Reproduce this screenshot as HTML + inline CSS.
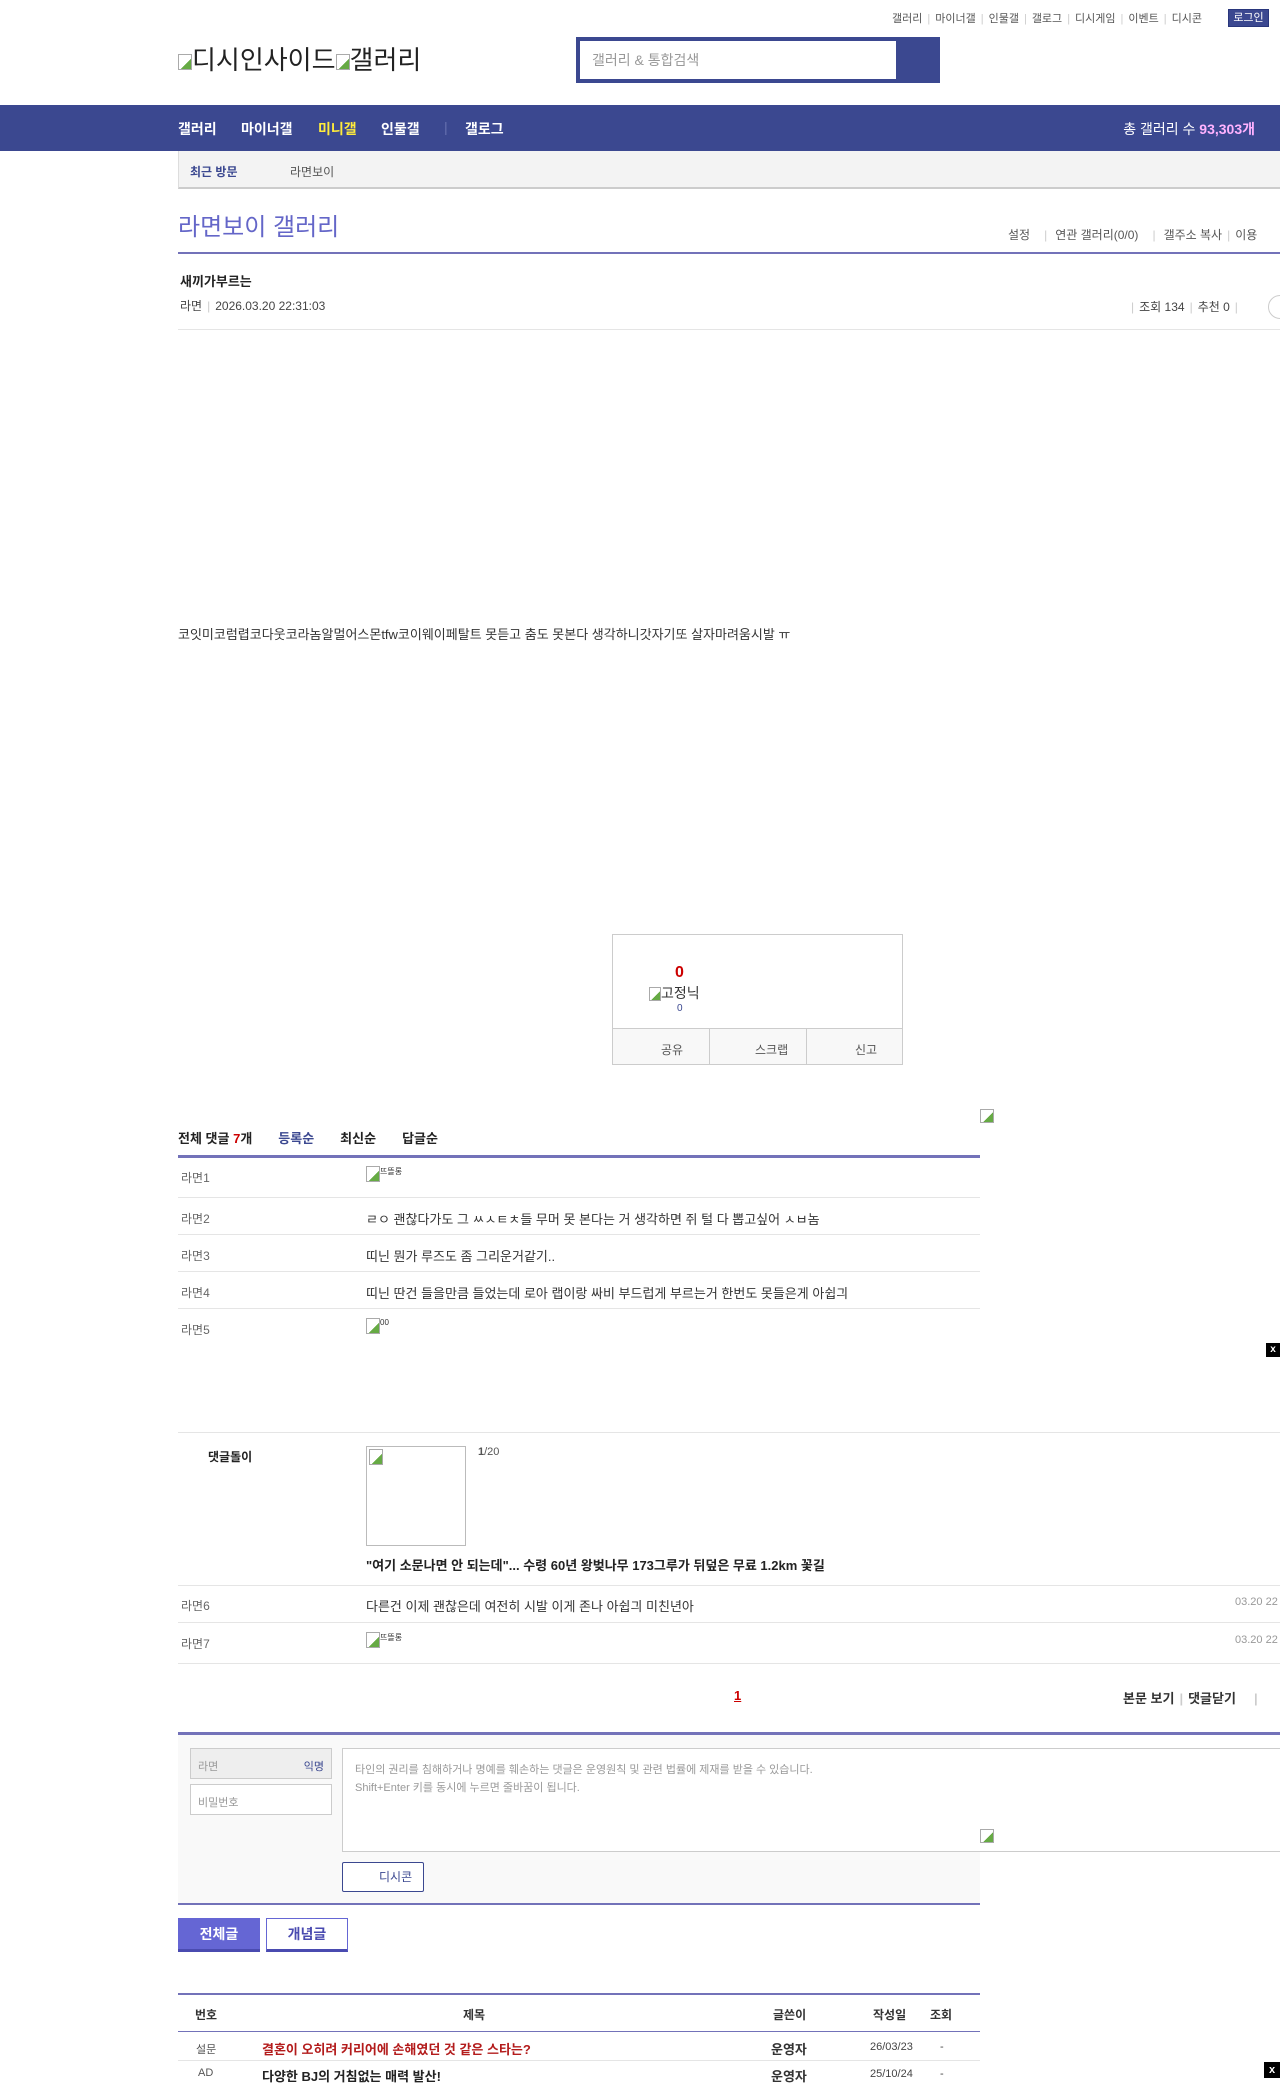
<!DOCTYPE html>
<html><head><meta charset="utf-8"><style>
*{margin:0;padding:0;box-sizing:border-box}
body{width:1280px;height:2078px;position:relative;overflow:hidden;background:#fff;font-family:"Liberation Sans","Noto Sans CJK KR",sans-serif;font-size:12px;color:#333}
.a{position:absolute;white-space:nowrap}
.sep{color:#ccc;margin:0 5px}
.hl{position:absolute;height:1px;background:#e5e5e5}
.ico{display:inline-block;width:14px;height:16px;border:1px solid #aaa;vertical-align:middle;background:linear-gradient(135deg,#fff 60%,#6a4 60%)}
.nv{position:absolute;top:119px;color:#fff;font-size:14px;font-weight:bold;white-space:nowrap}
</style></head><body>
<div class="a" style="top:10px;left:892px;font-size:11px;color:#555">갤러리<span class="sep">|</span>마이너갤<span class="sep">|</span>인물갤<span class="sep">|</span>갤로그<span class="sep">|</span>디시게임<span class="sep">|</span>이벤트<span class="sep">|</span>디시콘</div>
<div class="a" style="top:9px;left:1228px;width:41px;height:18px;background:#3b4890;border:1px solid #29367c;color:#fff;font-size:11px;text-align:center;line-height:16px">로그인</div>
<div class="a" style="top:40px;left:178px;font-size:26px;color:#222"><span class="ico"></span>디시인사이드<span class="ico"></span>갤러리</div>
<div class="a" style="top:37px;left:576px;width:364px;height:46px;background:#3b4890;padding:4px"><div style="width:316px;height:38px;background:#fff;color:#999;font-size:14px;line-height:38px;padding-left:12px">갤러리 &amp; 통합검색</div></div>
<div class="a" style="top:105px;left:0;width:1280px;height:46px;background:#3b4890"></div>
<div class="nv" style="left:178px">갤러리</div>
<div class="nv" style="left:241px">마이너갤</div>
<div class="nv" style="left:318px;color:#ffeb3b">미니갤</div>
<div class="nv" style="left:381px">인물갤</div>
<div class="nv" style="left:444px;color:#6670b0;font-weight:normal">|</div>
<div class="nv" style="left:465px">갤로그</div>
<div class="a" style="top:119px;right:25px;color:#fff;font-size:14px">총 갤러리 수 <b style="color:#ffb2ff">93,303개</b></div>
<div class="a" style="top:151px;left:178px;width:1102px;height:38px;background:#f3f3f3;border-left:1px solid #ddd;border-bottom:2px solid #ccc"></div>
<div class="a" style="top:163px;left:190px;color:#3b4890;font-weight:bold;font-size:12px">최근 방문</div>
<div class="a" style="top:163px;left:290px;color:#555;font-size:12px">라면보이</div>
<div class="a" style="top:207px;left:178px;color:#6466c8;font-size:24px">라면보이 갤러리</div>
<div class="a" style="top:226px;left:1008px;color:#555;font-size:12px">설정<span class="sep" style="margin:0 8px 0 14px">|</span>연관 갤러리(0/0)<span class="sep" style="margin:0 8px 0 14px">|</span>갤주소 복사<span class="sep">|</span>이용</div>
<div class="a" style="top:252px;left:178px;width:1102px;height:2px;background:#7372b9"></div>
<div class="a" style="top:271px;left:180px;font-weight:bold;font-size:13px;color:#222">새끼가부르는</div>
<div class="a" style="top:297px;left:180px;color:#444;font-size:12px">라면<span class="sep">|</span>2026.03.20 22:31:03</div>
<div class="a" style="top:298px;left:1126px;color:#444;font-size:12px"><span class="sep">|</span>조회 134<span class="sep">|</span>추천 0<span class="sep">|</span></div>
<div class="a" style="top:295px;left:1268px;width:24px;height:24px;border-radius:50%;border:1px solid #ccc"></div>
<div class="hl" style="top:329px;left:178px;width:1102px"></div>
<div class="a" style="top:624px;left:178px;font-size:13px;color:#333">코잇미코럼렵코다웃코라놈알멀어스몬tfw코이웨이페탈트 못듣고 춤도 못본다 생각하니갓자기또 살자마려움시발 ㅠ</div>
<div class="a" style="top:934px;left:612px;width:291px;height:131px;border:1px solid #ccc"></div>
<div class="a" style="top:1028px;left:613px;width:289px;height:36px;background:#f8f8f8;border-top:1px solid #ccc"></div>
<div class="a" style="top:1028px;left:709px;width:1px;height:37px;background:#ccc"></div>
<div class="a" style="top:1028px;left:806px;width:1px;height:37px;background:#ccc"></div>
<div class="a" style="top:1041px;left:661px;color:#555">공유</div>
<div class="a" style="top:1041px;left:755px;color:#555">스크랩</div>
<div class="a" style="top:1041px;left:855px;color:#555">신고</div>
<div class="a" style="top:964px;left:675px;color:#c00;font-weight:bold;font-size:16px">0</div>
<div class="a" style="top:983px;left:649px;font-size:14px;color:#333"><span class="ico" style="width:12px;height:14px"></span>고정닉</div>
<div class="a" style="top:1003px;left:677px;color:#3b4890;font-size:10px">0</div>
<div class="a" style="top:1108px;left:980px"><span class="ico" style="width:14px;height:14px"></span></div>
<div class="a" style="top:1128px;left:178px;font-weight:bold;font-size:13px;color:#222">전체 댓글 <span style="color:#c00">7</span>개<span style="margin-left:26px;color:#3b4890">등록순</span><span style="margin-left:26px">최신순</span><span style="margin-left:26px">답글순</span></div>
<div class="a" style="top:1155px;left:178px;width:802px;height:3px;background:#7372b9"></div>
<div class="a" style="top:1169px;left:181px;color:#666">라면1</div>
<div class="a" style="top:1166px;left:366px"><span class="ico"></span><span style="font-size:8px;vertical-align:top">뜨뜰롱</span></div>
<div class="hl" style="top:1197px;left:178px;width:802px"></div>
<div class="a" style="top:1210px;left:181px;color:#666">라면2</div><div class="a" style="top:1209px;left:366px;font-size:13px">ㄹㅇ 괜찮다가도 그 ㅆㅅㅌㅊ들 무머 못 본다는 거 생각하면 쥐 털 다 뽑고싶어 ㅅㅂ놈</div>
<div class="hl" style="top:1234px;left:178px;width:802px"></div>
<div class="a" style="top:1247px;left:181px;color:#666">라면3</div><div class="a" style="top:1246px;left:366px;font-size:13px">띠닌 뭔가 루즈도 좀 그리운거같기..</div>
<div class="hl" style="top:1271px;left:178px;width:802px"></div>
<div class="a" style="top:1284px;left:181px;color:#666">라면4</div><div class="a" style="top:1283px;left:366px;font-size:13px">띠닌 딴건 들을만큼 들었는데 로아 랩이랑 싸비 부드럽게 부르는거 한번도 못들은게 아쉽긔</div>
<div class="hl" style="top:1308px;left:178px;width:802px"></div>
<div class="a" style="top:1321px;left:181px;color:#666">라면5</div>
<div class="a" style="top:1318px;left:366px"><span class="ico"></span><span style="font-size:8px;vertical-align:top">00</span></div>
<div class="a" style="top:1343px;left:1266px;width:14px;height:14px;background:#000;color:#fff;font-size:10px;font-weight:bold;text-align:center;line-height:14px">x</div>
<div class="hl" style="top:1432px;left:178px;width:1102px"></div>
<div class="a" style="top:1448px;left:208px;font-weight:bold;color:#222">댓글돌이</div>
<div class="a" style="top:1446px;left:366px;width:100px;height:100px;border:1px solid #bbb;padding:2px"><span class="ico"></span></div>
<div class="a" style="top:1446px;left:478px;font-size:11px;color:#555"><b>1</b>/20</div>
<div class="a" style="top:1555px;left:366px;font-weight:bold;font-size:13px;color:#222">"여기 소문나면 안 되는데"... 수령 60년 왕벚나무 173그루가 뒤덮은 무료 1.2km 꽃길</div>
<div class="hl" style="top:1585px;left:178px;width:1102px"></div>
<div class="a" style="top:1597px;left:181px;color:#666">라면6</div><div class="a" style="top:1596px;left:366px;font-size:13px">다른건 이제 괜찮은데 여전히 시발 이게 존나 아쉽긔 미친년아</div>
<div class="a" style="top:1596px;left:1235px;color:#999;font-size:11px">03.20 22</div>
<div class="hl" style="top:1622px;left:178px;width:1102px"></div>
<div class="a" style="top:1635px;left:181px;color:#666">라면7</div>
<div class="a" style="top:1632px;left:366px"><span class="ico"></span><span style="font-size:8px;vertical-align:top">뜨뜰롱</span></div>
<div class="a" style="top:1634px;left:1235px;color:#999;font-size:11px">03.20 22</div>
<div class="hl" style="top:1663px;left:178px;width:1102px"></div>
<div class="a" style="top:1688px;left:734px;color:#c00;font-weight:bold;font-size:13px;text-decoration:underline">1</div>
<div class="a" style="top:1688px;left:1123px;font-weight:bold;color:#333;font-size:13px">본문 보기<span class="sep">|</span>댓글닫기<span class="sep" style="margin-left:18px">|</span></div>
<div class="a" style="top:1732px;left:178px;width:1102px;height:3px;background:#7372b9"></div>
<div class="a" style="top:1735px;left:178px;width:802px;height:169px;background:#f9f9f9"></div>
<div class="a" style="top:1748px;left:190px;width:142px;height:31px;background:#eee;border:1px solid #ccc;color:#999;padding:9px 7px;font-size:11px">라면<span style="float:right;color:#3b4890">익명</span></div>
<div class="a" style="top:1784px;left:190px;width:142px;height:31px;background:#fff;border:1px solid #ccc;color:#999;padding:9px 7px;font-size:11px">비밀번호</div>
<div class="a" style="top:1748px;left:342px;width:950px;height:104px;background:#fff;border:1px solid #ccc;color:#999;padding:12px 12px;font-size:11px;line-height:18px">타인의 권리를 침해하거나 명예를 훼손하는 댓글은 운영원칙 및 관련 법률에 제재를 받을 수 있습니다.<br>Shift+Enter 키를 동시에 누르면 줄바꿈이 됩니다.</div>
<div class="a" style="top:1828px;left:980px"><span class="ico" style="width:14px;height:14px"></span></div>
<div class="a" style="top:1862px;left:342px;width:82px;height:30px;background:#fff;border:1px solid #3b4890;border-radius:2px;color:#3b4890;font-size:12px;padding-left:36px;line-height:28px">디시콘</div>
<div class="a" style="top:1903px;left:178px;width:802px;height:2px;background:#7372b9"></div>
<div class="a" style="top:1918px;left:178px;width:82px;height:34px;background:#6566d4;border-bottom:3px solid #4a4bb0;color:#fff;font-weight:bold;font-size:14px;text-align:center;line-height:32px">전체글</div>
<div class="a" style="top:1918px;left:266px;width:82px;height:34px;background:#fff;border:1px solid #6566d4;border-bottom:3px solid #4a4bb0;color:#4a4bb0;font-weight:bold;font-size:14px;text-align:center;line-height:30px">개념글</div>
<div class="a" style="top:1993px;left:178px;width:802px;height:2px;background:#7372b9"></div>
<div class="a" style="top:2006px;left:195px;font-weight:bold;color:#333">번호</div>
<div class="a" style="top:2006px;left:463px;font-weight:bold;color:#333">제목</div>
<div class="a" style="top:2006px;left:773px;font-weight:bold;color:#333">글쓴이</div>
<div class="a" style="top:2006px;left:873px;font-weight:bold;color:#333">작성일</div>
<div class="a" style="top:2006px;left:930px;font-weight:bold;color:#333">조회</div>
<div class="a" style="top:2031px;left:178px;width:802px;height:1px;background:#7372b9"></div>
<div class="a" style="top:2041px;left:196px;font-size:11px;color:#555">설문</div>
<div class="a" style="top:2039px;left:262px;font-weight:bold;color:#b31b1b;font-size:13px">결혼이 오히려 커리어에 손해였던 것 같은 스타는?</div>
<div class="a" style="top:2039px;left:771px;font-weight:bold;color:#333;font-size:13px">운영자</div>
<div class="a" style="top:2041px;left:870px;font-size:11px;color:#444">26/03/23</div>
<div class="a" style="top:2041px;left:940px;font-size:11px;color:#444">-</div>
<div class="hl" style="top:2060px;left:178px;width:802px"></div>
<div class="a" style="top:2067px;left:198px;font-size:11px;color:#555">AD</div>
<div class="a" style="top:2066px;left:262px;font-weight:bold;color:#222;font-size:13px">다양한 BJ의 거침없는 매력 발산!</div>
<div class="a" style="top:2066px;left:771px;font-weight:bold;color:#333;font-size:13px">운영자</div>
<div class="a" style="top:2068px;left:870px;font-size:11px;color:#444">25/10/24</div>
<div class="a" style="top:2068px;left:940px;font-size:11px;color:#444">-</div>
<div class="a" style="top:2062px;left:1264px;width:16px;height:16px;background:#000;color:#fff;font-size:11px;font-weight:bold;text-align:center;line-height:16px">x</div>
</body></html>
